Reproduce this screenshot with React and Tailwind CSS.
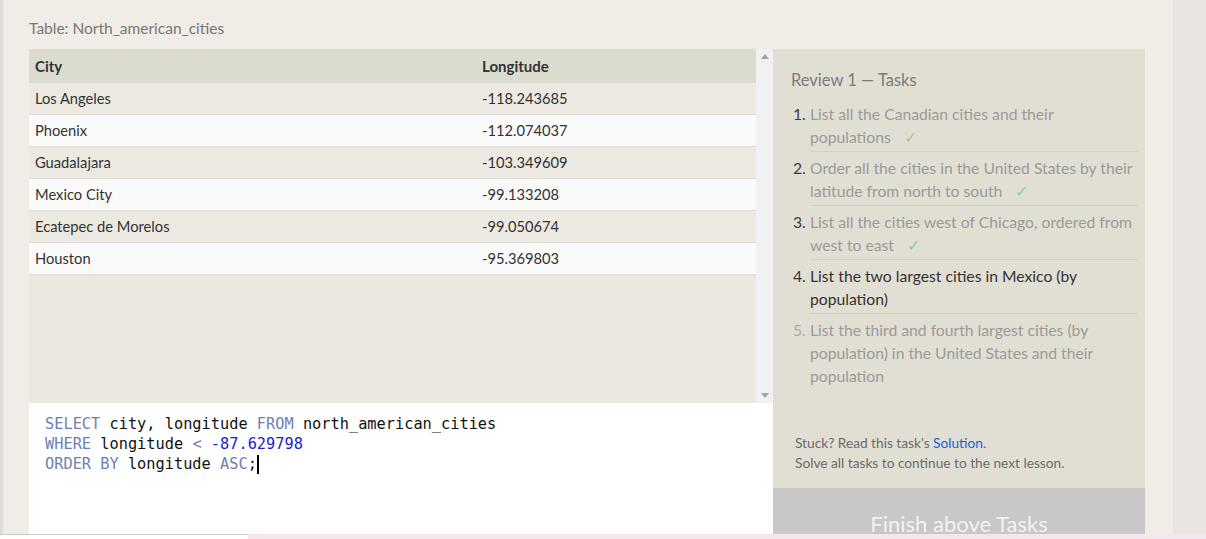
import React from "react";

const rows = [
  ["Los Angeles", "-118.243685"],
  ["Phoenix", "-112.074037"],
  ["Guadalajara", "-103.349609"],
  ["Mexico City", "-99.133208"],
  ["Ecatepec de Morelos", "-99.050674"],
  ["Houston", "-95.369803"],
];

const tasks = [
  { text: "List all the Canadian cities and their populations", done: true },
  { text: "Order all the cities in the United States by their latitude from north to south", done: true },
  { text: "List all the cities west of Chicago, ordered from west to east", done: true },
  { text: "List the two largest cities in Mexico (by population)", current: true },
  { text: "List the third and fourth largest cities (by population) in the United States and their population" },
];

function TableView() {
  return (
    <div className="flex h-[354px] bg-[#eae8e0]">
      <div className="flex-1">
        <div className="flex h-[34px] items-center bg-[#dcdbcf] font-bold text-[#333] text-[15px]">
          <div className="w-[447px] pl-[6px]">City</div>
          <div className="pl-[6px]">Longitude</div>
        </div>
        {rows.map(([city, lng], i) => (
          <div
            key={city}
            className={`flex h-[32px] items-center border-b border-[#dedcd5] text-[14.7px] text-[#333] ${
              i % 2 === 0 ? "bg-[#ebe9e2]" : "bg-[#fafafa]"
            }`}
          >
            <div className="w-[447px] pl-[6px]">{city}</div>
            <div className="pl-[6px]">{lng}</div>
          </div>
        ))}
      </div>
      {/* scrollbar */}
      <div className="w-[17px] bg-[#f1f1f1] flex flex-col justify-between items-center py-[5px]">
        <svg width="8" height="5" viewBox="0 0 8 5">
          <path d="M0 5 L4 0 L8 5 Z" fill="#a3a3a3" />
        </svg>
        <svg width="8" height="5" viewBox="0 0 8 5">
          <path d="M0 0 L4 5 L8 0 Z" fill="#a3a3a3" />
        </svg>
      </div>
    </div>
  );
}

function Editor() {
  const kw = "text-[#6e80b3]";
  return (
    <div className="h-[140px] bg-white pl-[16px] pt-[11px] font-['DejaVu_Sans_Mono',monospace] text-[15.3px] leading-[20px] text-[#111]">
      <div>
        <span className={kw}>SELECT</span> city, longitude <span className={kw}>FROM</span> north_american_cities
      </div>
      <div>
        <span className={kw}>WHERE</span> longitude <span className={kw}>&lt;</span>{" "}
        <span className="text-[#1c1cd0]">-87.629798</span>
      </div>
      <div className="flex items-center">
        <span>
          <span className={kw}>ORDER BY</span> longitude <span className={kw}>ASC</span>;
        </span>
        <span className="inline-block w-[2px] h-[19px] bg-black" />
      </div>
    </div>
  );
}

function TasksPanel() {
  return (
    <div className="w-[372px]">
      <div className="h-[439px] bg-[#e1dfd4] pl-[18px] pr-[7px] pt-[20px] flex flex-col">
        <div className="text-[16.5px] text-[#7a7a80] leading-[22px]">Review 1 — Tasks</div>
        <ol className="mt-[7px]">
          {tasks.map((t, i) => (
            <li key={i} className="flex text-[15.7px] leading-[23px]">
              <span
                className={`w-[19px] shrink-0 pl-[2px] pt-[5px] ${
                  t.current ? "text-[#333]" : i < 3 ? "text-[#3a3a4a]" : "text-[#aaa]"
                }`}
              >
                {i + 1}.
              </span>
              <div
                className={`flex-1 pt-[5px] pb-[2px] ${i < 4 ? "border-b border-[#d3d1c6]" : ""} ${
                  t.current ? "text-[#333]" : "text-[#9a9a9a]"
                }`}
              >
                {t.text}
                {t.done && <span className="ml-[13px] text-[#8fcf9a] leading-[20px]">✓</span>}
              </div>
            </li>
          ))}
        </ol>
        <div className="mt-auto mb-[15px] pl-[4px] text-[13.7px] leading-[20px] text-[#6b6b6b]">
          <div>
            Stuck? Read this task's <span className="text-[#1a5fdc]">Solution</span>.
          </div>
          <div>Solve all tasks to continue to the next lesson.</div>
        </div>
      </div>
      <div className="h-[70px] bg-[#c8c8c8] flex items-center justify-center text-[22px] text-[#f2f2f2]">
        Finish above Tasks
      </div>
    </div>
  );
}

export default function App() {
  return (
    <div className="w-[1206px] h-[539px] overflow-hidden flex flex-col font-['Lato',sans-serif]">
      <div className="flex h-[534px] overflow-hidden">
        <div className="w-[3px] bg-[#e0ddd8]" />
        <div className="w-[1170px] bg-[#f0ede6] pl-[26px] pt-[18px]">
          <div className="text-[15.5px] text-[#777] leading-[20px] h-[31px]">Table: North_american_cities</div>
          <div className="flex">
            <div className="w-[744px]">
              <TableView />
              <Editor />
            </div>
            <TasksPanel />
          </div>
        </div>
        <div className="flex-1 bg-[#e8e4e0]" />
      </div>
      <div className="flex h-[5px]">
        <div className="w-[248px] border-t border-[#c8c8c8] bg-white" />
        <div className="flex-1 bg-[#f3e6ef]" />
      </div>
    </div>
  );
}
